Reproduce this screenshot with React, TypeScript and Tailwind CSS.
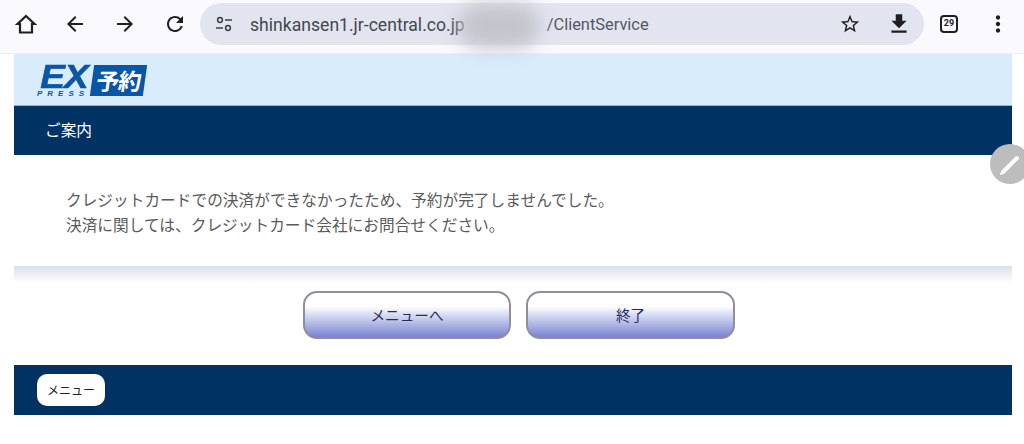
const jpFont = "font-['Noto_Sans_CJK_JP','Noto_Sans',sans-serif]";

const MaterialIcon = ({ d, size, className }: { d: string; size: number; className?: string }) => (
  <svg width={size} height={size} viewBox="0 0 24 24" fill="#1f1f1f" className={className}>
    <path d={d} />
  </svg>
);

const HomeIcon = () => (
  <svg width="22" height="22" viewBox="0 0 22 22" fill="none" stroke="#1f1f1f" strokeWidth="2.2" strokeLinejoin="miter" className="ml-[1px]">
    <path d="M11 3 L19.5 11 H17 V19.5 H5 V11 H2.5 Z" />
  </svg>
);

const SiteInfoIcon = () => (
  <svg width="18" height="18" viewBox="0 0 18 18" fill="none" stroke="#3c4043" strokeWidth="1.5">
    <circle cx="5" cy="5" r="2.4" />
    <path d="M10 5h7" />
    <path d="M1 13h7" />
    <circle cx="13" cy="13" r="2.4" />
  </svg>
);

const Logo = () => (
  <div className="flex items-start h-[33px] w-[112px]">
    <div className="flex flex-col w-[51px] text-[#0b56a4] font-['Liberation_Sans',sans-serif] italic font-bold">
      <span className="text-[33px] leading-[24px] tracking-[-1px] pl-[3px] h-[25px] scale-x-[1.12] origin-left [-webkit-text-stroke:0.6px_#0b56a4]">EX</span>
      <span className="text-[8px] leading-[8px] tracking-[5px] font-black">PRESS</span>
    </div>
    <div className={`${jpFont} h-[31px] w-[53px] bg-[#0b56a4] -skew-x-[8deg] text-white font-bold text-[23px] leading-[30px] text-center ml-[4px] tracking-[-1px]`}>
      予約
    </div>
  </div>
);

export default function App() {
  return (
    <div className={`relative w-[1024px] h-[444px] overflow-hidden bg-white ${jpFont}`}>
      {/* browser toolbar */}
      <div className="flex items-center h-[54px] bg-[#f9f9fe] border-b border-[#eeeef2] pl-[14px] pb-[5px]">
        <HomeIcon />
        <MaterialIcon size={24} className="ml-[26px]" d="M20 11H7.83l5.59-5.59L12 4l-8 8 8 8 1.41-1.41L7.83 13H20v-2z" />
        <MaterialIcon size={24} className="ml-[26px]" d="M12 4l-1.41 1.41L16.17 11H4v2h12.17l-5.58 5.59L12 20l8-8z" />
        <MaterialIcon size={24} className="ml-[26px]" d="M17.65 6.35A7.958 7.958 0 0012 4c-4.42 0-7.99 3.58-7.99 8s3.57 8 7.99 8c3.73 0 6.84-2.55 7.73-6h-2.08A5.99 5.99 0 0112 18c-3.31 0-6-2.69-6-6s2.69-6 6-6c1.66 0 3.14.69 4.22 1.78L13 11h7V4l-2.35 2.35z" />
        <div className="flex items-center h-[42px] w-[724px] ml-[13px] rounded-full bg-[#e2e5f0] pl-[15px] pr-[12px]">
          <SiteInfoIcon />
          <span className="ml-[17px] pt-[2px] text-[17.6px] text-[#44474e] font-['Roboto',sans-serif] whitespace-nowrap">shinkansen1.jr-central.co.jp</span>
          <span className="ml-[82px] pt-[2px] text-[16.4px] text-[#55585f] font-['Roboto',sans-serif]">/ClientService</span>
          <MaterialIcon size={22} className="ml-auto mr-[4px]" d="M22 9.24l-7.19-.62L12 2 9.19 8.63 2 9.24l5.46 4.73L5.82 21 12 17.27 18.18 21l-1.63-7.03L22 9.24zM12 15.4l-3.76 2.27 1-4.28-3.32-2.88 4.38-.38L12 6.1l1.71 4.04 4.38.38-3.32 2.88 1 4.28L12 15.4z" />
          <MaterialIcon size={26} className="ml-[21px]" d="M19 9h-4V3H9v6H5l7 7 7-7zM5 18v2h14v-2H5z" />
        </div>
        <div className="flex items-center justify-center ml-[16px] w-[18px] h-[18px] rounded-[4px] border-2 border-[#1f1f1f] text-[9px] font-bold font-['Roboto',sans-serif] text-[#1f1f1f]">
          29
        </div>
        <MaterialIcon size={26} className="ml-[27px]" d="M12 8c1.1 0 2-.9 2-2s-.9-2-2-2-2 .9-2 2 .9 2 2 2zm0 2c-1.1 0-2 .9-2 2s.9 2 2 2 2-.9 2-2-.9-2-2-2zm0 6c-1.1 0-2 .9-2 2s.9 2 2 2 2-.9 2-2-.9-2-2-2z" />
      </div>

      {/* page */}
      <div className="mx-[14px] w-[998px]">
        <div className="flex items-start h-[52px] bg-[#d8ecfb] border-b border-[#8fb4cf] pl-[23px] pt-[11px]">
          <Logo />
        </div>
        <div className="flex items-center h-[49px] bg-[#003263] pl-[31px] pb-[2px] text-[15.7px] text-white">ご案内</div>
        <div className="h-[111px] pl-[52px] pt-[32px] text-[15.7px] leading-[25px] text-[#5a5a5a]">
          <p>クレジットカードでの決済ができなかったため、予約が完了しませんでした。</p>
          <p>決済に関しては、クレジットカード会社にお問合せください。</p>
        </div>
        <div className="h-[17px] bg-gradient-to-b from-[#dcdfec] to-white" />
        <div className="flex justify-center gap-[15px] pt-[8px] pl-[12px] h-[82px]">
          <button className="w-[208px] h-[48px] rounded-[14px] border-2 border-[#8f8f9c] bg-gradient-to-b from-white from-30% to-[#7b84d0] text-[14.6px] text-[#2a2a66]">
            メニューへ
          </button>
          <button className="w-[209px] h-[48px] rounded-[14px] border-2 border-[#8f8f9c] bg-gradient-to-b from-white from-30% to-[#7b84d0] text-[14.6px] text-[#2a2a66]">
            終了
          </button>
        </div>
        <div className="flex items-center h-[50px] bg-[#003263] pl-[23px]">
          <button className="w-[68px] h-[32px] rounded-[10px] bg-white text-[12px] text-[#222222]">メニュー</button>
        </div>
      </div>

      {/* blurred part of the url */}
      <div className="absolute left-[458px] top-[4px] w-[82px] h-[44px] rounded-full bg-[#c4c5cc] blur-[9px]" />

      {/* floating pencil button */}
      <div className="absolute left-[990px] top-[144px] flex items-center justify-center w-[40px] h-[40px] rounded-full bg-[#bdbdbd]">
        <svg width="40" height="40" viewBox="0 0 40 40" fill="none" stroke="white" strokeLinecap="round">
          <path d="M13 28 L27 14" strokeWidth="4" />
          <path d="M11 30 L13 27" strokeWidth="2" />
        </svg>
      </div>
    </div>
  );
}
